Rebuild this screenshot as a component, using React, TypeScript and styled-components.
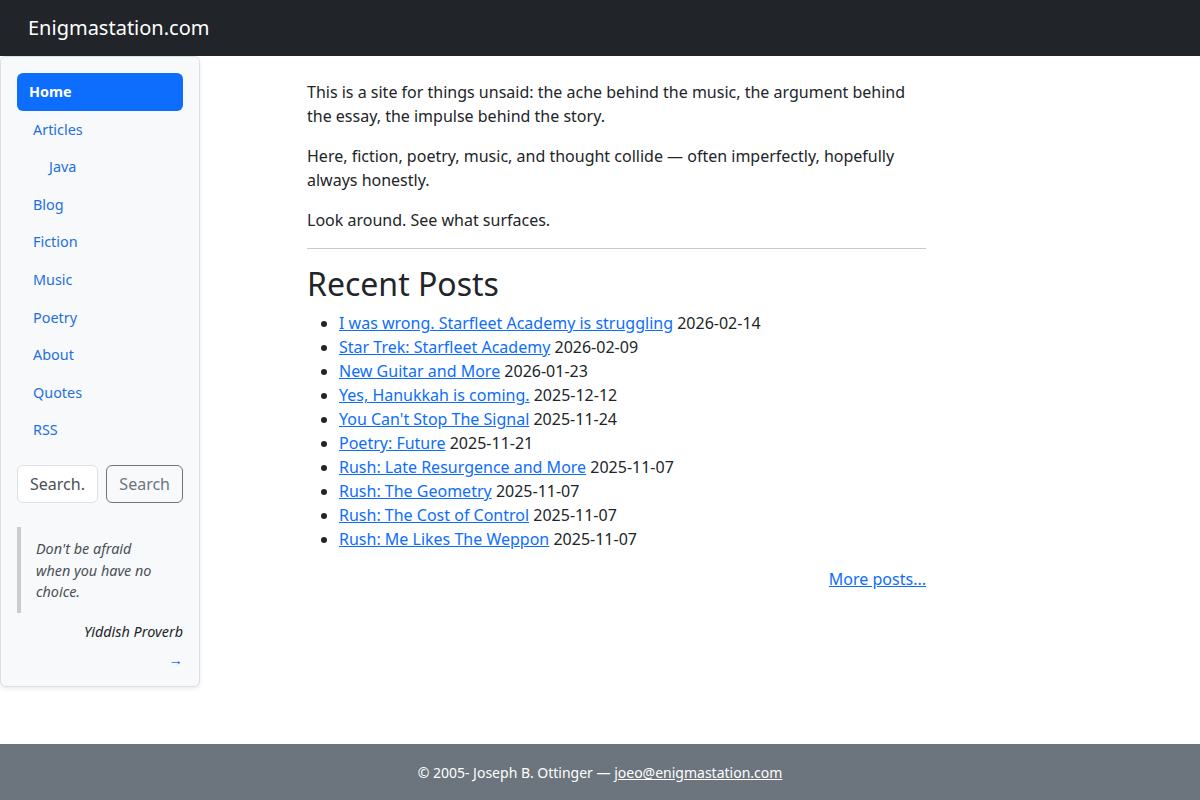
import React from 'react';
import styled, { createGlobalStyle } from 'styled-components';

const NAV_ITEMS = [
  { label: 'Home', active: true },
  { label: 'Articles' },
  { label: 'Java', nested: true },
  { label: 'Blog' },
  { label: 'Fiction' },
  { label: 'Music' },
  { label: 'Poetry' },
  { label: 'About' },
  { label: 'Quotes' },
  { label: 'RSS' },
];

const POSTS = [
  { title: 'I was wrong. Starfleet Academy is struggling', date: '2026-02-14' },
  { title: 'Star Trek: Starfleet Academy', date: '2026-02-09' },
  { title: 'New Guitar and More', date: '2026-01-23' },
  { title: 'Yes, Hanukkah is coming.', date: '2025-12-12' },
  { title: "You Can't Stop The Signal", date: '2025-11-24' },
  { title: 'Poetry: Future', date: '2025-11-21' },
  { title: 'Rush: Late Resurgence and More', date: '2025-11-07' },
  { title: 'Rush: The Geometry', date: '2025-11-07' },
  { title: 'Rush: The Cost of Control', date: '2025-11-07' },
  { title: 'Rush: Me Likes The Weppon', date: '2025-11-07' },
];

const GlobalStyle = createGlobalStyle`
  * {
    box-sizing: border-box;
  }

  body {
    margin: 0;
    font-family: "Noto Sans", "Open Sans", sans-serif;
    font-size: 16px;
    line-height: 1.5;
    color: #212529;
    background: #fff;
  }

  a {
    color: #0d6efd;
  }
`;

function App() {
  return (
    <Page>
      <GlobalStyle />
      <Navbar>
        <Brand href="#">Enigmastation.com</Brand>
      </Navbar>

      <Body>
        <Sidebar>
          <NavList>
            {NAV_ITEMS.map((item) => (
              <NavLink
                key={item.label}
                href="#"
                $active={item.active}
                $nested={item.nested}
              >
                {item.label}
              </NavLink>
            ))}
          </NavList>

          <SearchForm onSubmit={(event) => event.preventDefault()}>
            <SearchInput placeholder="Search..." />
            <SearchButton type="submit">Search</SearchButton>
          </SearchForm>

          <Quote>Don't be afraid when you have no choice.</Quote>
          <QuoteSource>Yiddish Proverb</QuoteSource>
          <MoreQuotes href="#">→</MoreQuotes>
        </Sidebar>

        <Main>
          <p>
            This is a site for things unsaid: the ache behind the music, the
            argument behind the essay, the impulse behind the story.
          </p>
          <p>
            Here, fiction, poetry, music, and thought collide — often
            imperfectly, hopefully always honestly.
          </p>
          <p>Look around. See what surfaces.</p>
          <Rule />
          <Heading>Recent Posts</Heading>
          <PostList>
            {POSTS.map((post) => (
              <li key={post.title}>
                <a href="#">{post.title}</a> {post.date}
              </li>
            ))}
          </PostList>
          <MorePosts>
            <a href="#">More posts...</a>
          </MorePosts>
        </Main>
      </Body>

      <Footer>
        © 2005- Joseph B. Ottinger — <a href="#">joeo@enigmastation.com</a>
      </Footer>
    </Page>
  );
}

const Page = styled.div`
  min-height: 100vh;
  display: flex;
  flex-direction: column;
`;

const Navbar = styled.nav`
  height: 56px;
  background: #212529;
  display: flex;
  align-items: center;
  padding: 0 28px;
`;

const Brand = styled.a`
  && {
    color: #fff;
  }
  font-size: 20px;
  line-height: 1.5;
  text-decoration: none;
`;

const Body = styled.div`
  display: flex;
  align-items: flex-start;
`;

const Sidebar = styled.aside`
  flex: none;
  width: 200px;
  padding: 16px;
  background: #f8f9fa;
  border: 1px solid #dcdfe3;
  border-radius: 6px;
  box-shadow: 0 2px 4px rgba(0, 0, 0, 0.08);
  display: flex;
  flex-direction: column;
`;

const NavList = styled.nav`
  display: flex;
  flex-direction: column;
`;

const NavLink = styled.a<{ $active?: boolean; $nested?: boolean }>`
  display: block;
  font-size: 0.9rem;
  line-height: 1.5;
  padding: 8px 16px 8px ${(p) => (p.$nested ? '32px' : p.$active ? '12px' : '16px')};
  border-radius: 6px;
  text-decoration: none;
  font-weight: ${(p) => (p.$active ? 700 : 400)};
  background: ${(p) => (p.$active ? '#0d6efd' : 'transparent')};
  && {
    color: ${(p) => (p.$active ? '#fff' : '#1f6fe0')};
  }
`;

const SearchForm = styled.form`
  display: flex;
  gap: 8px;
  margin-top: 16px;
`;

const SearchInput = styled.input`
  flex: 1;
  min-width: 0;
  height: 38px;
  padding: 6px 12px;
  font: inherit;
  color: #212529;
  background: #fff;
  border: 1px solid #dee2e6;
  border-radius: 6px;

  &::placeholder {
    color: #495057;
  }
`;

const SearchButton = styled.button`
  flex: none;
  height: 38px;
  padding: 6px 12px;
  font: inherit;
  color: #6c757d;
  background: transparent;
  border: 1px solid #6c757d;
  border-radius: 6px;
`;

const Quote = styled.blockquote`
  margin: 24px 0 0;
  padding: 11px 26px 10px 15px;
  border-left: 4px solid #ccc;
  font-size: 0.9rem;
  font-style: italic;
  color: #495057;
`;

const QuoteSource = styled.div`
  margin-top: 8px;
  text-align: right;
  font-size: 0.9rem;
  font-style: italic;
  color: #212529;
`;

const MoreQuotes = styled.a`
  align-self: flex-end;
  margin-top: 6px;
  font-size: 0.9rem;
  line-height: 1.5;
  text-decoration: none;
`;

const Main = styled.main`
  width: 619px;
  margin-left: 107px;
  padding-top: 24px;

  p {
    margin: 0 0 16px;
  }
`;

const Rule = styled.hr`
  margin: 16px 0;
  border: 0;
  border-top: 1px solid #c8c9ca;
`;

const Heading = styled.h2`
  margin: 0 0 8px;
  font-size: 32px;
  font-weight: 400;
  line-height: 1.2;
`;

const PostList = styled.ul`
  margin: 0 0 16px;
  padding-left: 32px;
`;

const MorePosts = styled.div`
  text-align: right;
`;

const Footer = styled.footer`
  margin-top: auto;
  padding: 17px 16px 15px;
  background: #6c757d;
  color: #fff;
  font-size: 14px;
  line-height: 24px;
  text-align: center;

  a {
    color: #fff;
  }
`;

export default App;
